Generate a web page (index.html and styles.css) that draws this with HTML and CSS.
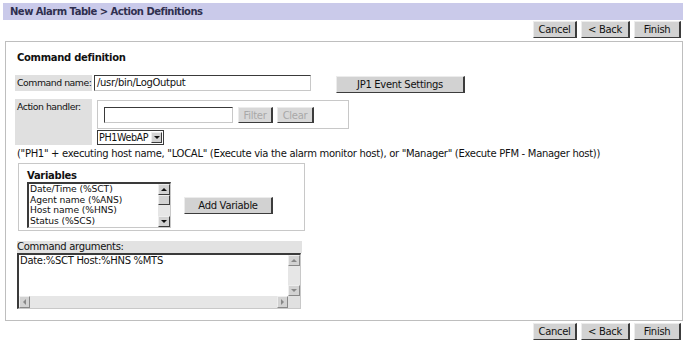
FILE: index.html
```html
<!DOCTYPE html>
<html lang="en">
  <head>
    <meta charset="UTF-8" />
    <meta name="viewport" content="width=device-width, initial-scale=1.0" />
    <title>Action Definitions</title>
    <link rel="stylesheet" href="styles.css">
  </head>
  <body>
    <div class="titlebar">New Alarm Table &gt; Action Definitions</div>
    <div class="nav">
      <button class="btn btn-cancel">Cancel</button>
      <button class="btn btn-back">&lt; Back</button>
      <button class="btn btn-finish">Finish</button>
    </div>

    <div class="panel">
      <h2>Command definition</h2>

      <div class="row">
        <span class="label">Command name:</span>
        <div class="field name-field">/usr/bin/LogOutput</div>
        <button class="btn jp1">JP1 Event Settings</button>
      </div>

      <div class="row handler-row">
        <span class="label tall">Action handler:</span>
        <div class="handler">
          <div class="filter-box">
            <div class="field filter-field"></div>
            <button class="btn btn-filter" disabled>Filter</button>
            <button class="btn btn-clear" disabled>Clear</button>
          </div>
          <div class="select">
            <span>PH1WebAP</span>
            <span class="drop"><i class="arrow down"></i></span>
          </div>
        </div>
      </div>

      <p class="note">("PH1" + executing host name, "LOCAL" (Execute via the alarm monitor host), or "Manager" (Execute PFM - Manager host))</p>

      <div class="vars">
        <div class="vars-title">Variables</div>
        <div class="vars-body">
          <div class="listbox">
            <ul>
              <li>Date/Time (%SCT)</li>
              <li>Agent name (%ANS)</li>
              <li>Host name (%HNS)</li>
              <li>Status (%SCS)</li>
            </ul>
            <div class="vscroll">
              <span class="sbtn"><i class="arrow up"></i></span>
              <span class="thumb"></span>
              <span class="track"></span>
              <span class="sbtn"><i class="arrow down"></i></span>
            </div>
          </div>
          <button class="btn add">Add Variable</button>
        </div>
      </div>

      <div class="args-label">Command arguments:</div>
      <div class="args">
        <div class="args-main">
          <div class="args-text">Date:%SCT Host:%HNS %MTS</div>
          <div class="vscroll light">
            <span class="sbtn"><i class="arrow up"></i></span>
            <span class="track"></span>
            <span class="sbtn"><i class="arrow down"></i></span>
          </div>
        </div>
        <div class="hscroll">
          <span class="sbtn"><i class="arrow left"></i></span>
          <span class="track"></span>
          <span class="sbtn"><i class="arrow right"></i></span>
          <span class="corner"></span>
        </div>
      </div>
    </div>

    <div class="nav bottom">
      <button class="btn btn-cancel">Cancel</button>
      <button class="btn btn-back">&lt; Back</button>
      <button class="btn btn-finish">Finish</button>
    </div>
  </body>
</html>
```

FILE: styles.css
```css
* {
  box-sizing: border-box;
}
body {
  margin: 0;
  font-family: "DejaVu Sans", Verdana, sans-serif;
  font-size: 10px;
  letter-spacing: -0.3px;
  color: #111;
  background: #ffffff;
  white-space: nowrap;
}
.titlebar {
  margin: 3px 2px 0 3px;
  height: 17px;
  line-height: 17px;
  padding-left: 7px;
  background: #cacaea;
  color: #2f2f4f;
  font-weight: bold;
  letter-spacing: -0.5px;
}
.nav {
  display: flex;
  justify-content: flex-end;
  gap: 4px;
  padding: 1px 4px 0 0;
}
.nav.bottom {
  padding-top: 2px;
}
.btn {
  font: inherit;
  letter-spacing: inherit;
  color: #111;
  height: 17px;
  padding: 0;
  background: #d2d2d2;
  border-style: solid;
  border-width: 1px 2px 1px 1px;
  border-color: #ececec #3c3c3c #3c3c3c #ececec;
  text-align: center;
}
.btn:disabled {
  color: #a8a8a8;
  background: #d8d8d8;
}
.btn-cancel {
  width: 44px;
}
.btn-back {
  width: 49px;
}
.btn-finish {
  width: 47px;
}
.panel {
  margin: 3px 2px 0 5px;
  height: 280px;
  border: 1px solid #bebebe;
  padding: 0 0 0 11px;
}
h2 {
  font-size: 10px;
  margin: 10px 0 11px;
  line-height: 12px;
}
.row {
  display: flex;
  align-items: flex-start;
}
.label {
  width: 77px;
  height: 16px;
  margin-left: -2px;
  padding-left: 2px;
  line-height: 15px;
  background: #e0e0e0;
  font-size: 9.3px;
  letter-spacing: -0.45px;
}
.label.tall {
  height: 46px;
}
.field {
  height: 16px;
  background: #fff;
  border-style: solid;
  border-width: 1px;
  border-color: #3a3a3a #c8c8c8 #c8c8c8 #3a3a3a;
  padding-left: 2px;
  line-height: 14px;
}
.name-field {
  width: 217px;
  margin-left: 2px;
}
.jp1 {
  width: 129px;
  margin: 1px 0 0 25px;
}
.handler-row {
  margin-top: 6px;
}
.handler {
  margin-left: 5px;
  padding-top: 1px;
}
.filter-box {
  display: flex;
  gap: 4px;
  width: 252px;
  height: 29px;
  border: 1px solid #c8c8c8;
  padding: 6px 0 0 6px;
}
.filter-field {
  width: 129px;
  margin-right: 1px;
}
.btn-filter {
  width: 35px;
  height: 16px;
}
.btn-clear {
  width: 37px;
  height: 16px;
}
.select {
  display: flex;
  width: 67px;
  height: 15px;
  margin-top: 1px;
  border: 1px solid #3a3a3a;
  line-height: 13px;
  padding-left: 1px;
  justify-content: space-between;
  font-size: 9.6px;
  letter-spacing: -0.4px;
}
.drop {
  width: 11px;
  height: 11px;
  margin: 1px 1px 0 0;
  background: #d2d2d2;
  border: 1px solid;
  border-color: #eee #3c3c3c #3c3c3c #eee;
  display: flex;
  align-items: center;
  justify-content: center;
}
.arrow {
  display: block;
  width: 0;
  height: 0;
  border: 3px solid transparent;
}
.arrow.down {
  border-top: 3px solid #111;
  border-bottom-width: 0;
}
.arrow.up {
  border-bottom: 3px solid #111;
  border-top-width: 0;
}
.arrow.left {
  border-right: 3px solid #888;
  border-left-width: 0;
}
.arrow.right {
  border-left: 3px solid #888;
  border-right-width: 0;
}
.note {
  margin: 3px 0 0;
  line-height: 12px;
}
.vars {
  width: 287px;
  height: 68px;
  margin: 3px 0 0 1px;
  border: 1px solid #c8c8c8;
  padding: 5px 0 0 8px;
}
.vars-title {
  font-weight: bold;
  line-height: 13px;
}
.vars-body {
  display: flex;
  align-items: center;
  gap: 13px;
}
.listbox {
  display: flex;
  width: 144px;
  height: 46px;
  border-style: solid;
  border-width: 2px 1px 1px 2px;
  border-color: #3a3a3a #c8c8c8 #c8c8c8 #3a3a3a;
}
.listbox ul {
  flex: 1;
  list-style: none;
  margin: 0;
  padding: 0 0 0 1px;
  line-height: 10.7px;
  font-size: 9.2px;
  letter-spacing: -0.1px;
}
.vscroll {
  display: flex;
  flex-direction: column;
  width: 12px;
  background: #e4e4e4;
}
.sbtn {
  width: 12px;
  height: 11px;
  flex: none;
  background: #d2d2d2;
  border: 1px solid;
  border-color: #eee #3c3c3c #3c3c3c #eee;
  display: flex;
  align-items: center;
  justify-content: center;
}
.thumb {
  height: 10px;
  background: #d2d2d2;
  border: 1px solid;
  border-color: #eee #3c3c3c #3c3c3c #eee;
}
.track {
  flex: 1;
  background: #e6e6e6;
}
.add {
  width: 89px;
  height: 17px;
}
.args-label {
  width: 285px;
  margin: 10px 0 0;
  height: 12px;
  line-height: 12px;
  background: #e2e2e2;
}
.args {
  width: 284px;
  height: 56px;
  border-style: solid;
  border-width: 2px 1px 1px 2px;
  border-color: #3a3a3a #c8c8c8 #c8c8c8 #3a3a3a;
  display: flex;
  flex-direction: column;
}
.args-main {
  flex: 1;
  display: flex;
}
.args-text {
  flex: 1;
  padding-left: 1px;
  line-height: 11px;
}
.vscroll.light .sbtn,
.hscroll .sbtn {
  border-color: #eee #888 #888 #eee;
}
.vscroll.light .arrow.up {
  border-bottom-color: #888;
}
.vscroll.light .arrow.down {
  border-top-color: #888;
}
.hscroll {
  display: flex;
  height: 12px;
}
.hscroll .sbtn {
  height: 12px;
  width: 11px;
}
.corner {
  width: 12px;
  background: #e0e0e0;
}
```
